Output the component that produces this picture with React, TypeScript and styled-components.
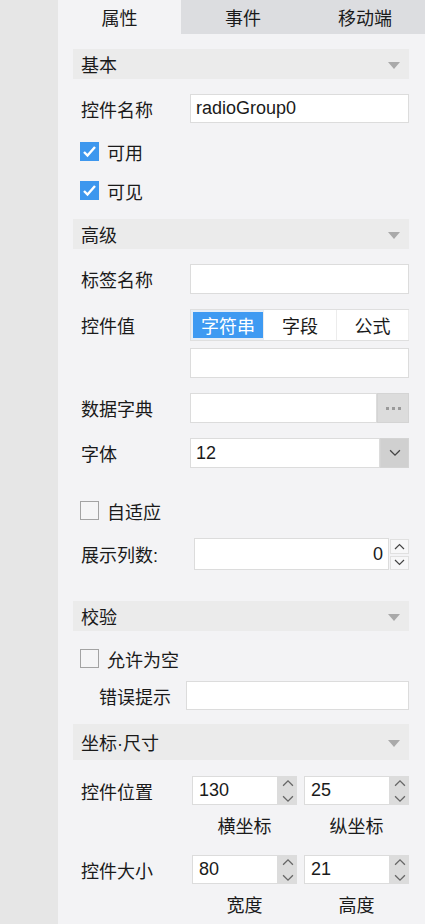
import React from "react";
import styled, { createGlobalStyle } from "styled-components";

const Global = createGlobalStyle`
  html, body { margin: 0; padding: 0; background: #e6e6e6; }
  body {
    font-family: "Liberation Sans", "Noto Sans CJK SC", sans-serif;
    font-size: 18px;
    color: #1a1a1a;
  }
  * { box-sizing: border-box; }
`;

const Page = styled.div`
  display: flex;
  min-height: 924px;
`;

const SideStrip = styled.div`
  width: 58px;
  flex: none;
  background: #e6e6e6;
`;

const Panel = styled.div`
  flex: 1;
  background: #f3f3f5;
  min-height: 924px;
`;

const Tabs = styled.div`
  display: grid;
  grid-template-columns: 123px 124px 1fr;
  height: 34px;
  background: #dcdde0;
`;

const Tab = styled.div<{ $active?: boolean }>`
  display: flex;
  align-items: center;
  justify-content: center;
  font-size: 18px;
  background: ${(p) => (p.$active ? "#f3f3f5" : "transparent")};
`;

const Content = styled.div`
  padding: 0 16px 0 15px;
  display: flex;
  flex-direction: column;
`;

const SectionHeader = styled.div<{ $mt: number; $h?: number }>`
  margin-top: ${(p) => p.$mt}px;
  height: ${(p) => p.$h ?? 30}px;
  background: #ebebeb;
  display: flex;
  align-items: center;
  justify-content: space-between;
  padding: 0 9px 0 8px;
  font-size: 18px;
`;

const Caret = styled.span`
  width: 0;
  height: 0;
  border-left: 6px solid transparent;
  border-right: 6px solid transparent;
  border-top: 7px solid #a9a9a9;
  margin-top: 3px;
`;

const Row = styled.div<{ $mt: number; $h?: number }>`
  margin-top: ${(p) => p.$mt}px;
  height: ${(p) => p.$h ?? 30}px;
  display: flex;
  align-items: center;
`;

const Label = styled.div<{ $w?: number; $pl?: number }>`
  width: ${(p) => p.$w ?? 117}px;
  padding-left: ${(p) => p.$pl ?? 8}px;
  flex: none;
  white-space: nowrap;
`;

const TextBox = styled.div<{ $align?: string }>`
  flex: 1;
  height: 100%;
  background: #fff;
  border: 1px solid #dcdcdc;
  display: flex;
  align-items: center;
  justify-content: ${(p) => p.$align ?? "flex-start"};
  padding: 0 5px;
  font-size: 18px;
`;

const CheckRow = styled.div<{ $mt: number }>`
  margin-top: ${(p) => p.$mt}px;
  height: 19px;
  display: flex;
  align-items: center;
  gap: 8px;
  padding-left: 7px;
`;

const Box = styled.span<{ $checked?: boolean }>`
  width: 19px;
  height: 19px;
  flex: none;
  display: flex;
  align-items: center;
  justify-content: center;
  background: ${(p) => (p.$checked ? "#3d97ee" : "#f5f5f6")};
  border: ${(p) => (p.$checked ? "none" : "1.5px solid #a3a3a3")};
`;

const Segmented = styled.div`
  flex: 1;
  height: 100%;
  display: grid;
  grid-template-columns: 73px 73px 1fr;
  background: #fff;
  border: 1px solid #dfdfdf;
  border-right: none;
`;

const Segment = styled.div<{ $active?: boolean }>`
  display: flex;
  align-items: center;
  justify-content: center;
  background: ${(p) => (p.$active ? "#3e9af2" : "#fff")};
  color: ${(p) => (p.$active ? "#fff" : "#1a1a1a")};
  border: ${(p) => (p.$active ? "2px solid #e6eef7" : "none")};
  border-right: 1px solid #ececec;
`;

const Combo = styled.div`
  flex: 1;
  height: 100%;
  display: flex;
`;

const SideButton = styled.div<{ $w: number; $bg: string }>`
  width: ${(p) => p.$w}px;
  flex: none;
  height: 100%;
  background: ${(p) => p.$bg};
  border: 1px solid #d4d4d4;
  display: flex;
  align-items: center;
  justify-content: center;
  gap: 3px;
`;

const Dot = styled.span`
  width: 3px;
  height: 3px;
  background: #9a9a9a;
`;

const SmallSpin = styled.div`
  width: 20px;
  flex: none;
  height: 100%;
  display: flex;
  flex-direction: column;
  gap: 2px;
  padding: 1px 0 0 1px;
`;

const SmallSpinBtn = styled.div`
  flex: 1;
  background: #f7f7f8;
  border: 1px solid #e0e0e0;
  display: flex;
  align-items: center;
  justify-content: center;
`;

const PairGroup = styled.div`
  flex: 1;
  display: grid;
  grid-template-columns: 105px 105px;
  justify-content: space-between;
  height: 100%;
`;

const NumField = styled.div`
  display: flex;
  height: 100%;
`;

const NumInput = styled.div`
  flex: 1;
  background: #fff;
  border: 1px solid #dcdcdc;
  display: flex;
  align-items: center;
  padding: 0 6px;
  font-size: 18px;
`;

const Spin = styled.div`
  width: 19px;
  flex: none;
  background: #dcdcdc;
  display: flex;
  flex-direction: column;
  justify-content: space-between;
  align-items: center;
  padding: 3px 0 2px;
`;

const SubLabels = styled.div<{ $mt: number }>`
  margin-top: ${(p) => p.$mt}px;
  height: 22px;
  padding-left: 119px;
  display: grid;
  grid-template-columns: 105px 105px;
  justify-content: space-between;
`;

const SubLabel = styled.div`
  text-align: center;
  font-size: 18px;
  line-height: 22px;
`;

const Chevron = ({ up, w = 11, h = 7, color = "#555" }: { up?: boolean; w?: number; h?: number; color?: string }) => (
  <svg width={w} height={h} viewBox="0 0 11 7">
    <path
      d={up ? "M1 6 L5.5 1.5 L10 6" : "M1 1 L5.5 5.5 L10 1"}
      fill="none"
      stroke={color}
      strokeWidth="1.2"
    />
  </svg>
);

const Tick = () => (
  <svg width="15" height="13" viewBox="0 0 15 13">
    <path d="M2 7 L5.5 10.5 L13 2" fill="none" stroke="#fff" strokeWidth="2.4" />
  </svg>
);

const Pair = ({ a, b }: { a: string; b: string }) => (
  <PairGroup>
    {[a, b].map((v) => (
      <NumField key={v}>
        <NumInput>{v}</NumInput>
        <Spin>
          <Chevron up w={12} h={8} color="#666" />
          <Chevron w={12} h={8} color="#666" />
        </Spin>
      </NumField>
    ))}
  </PairGroup>
);

export default function App() {
  return (
    <>
      <Global />
      <Page>
        <SideStrip />
        <Panel>
          <Tabs>
            <Tab $active>属性</Tab>
            <Tab>事件</Tab>
            <Tab>移动端</Tab>
          </Tabs>
          <Content>
            <SectionHeader $mt={15}>
              基本
              <Caret />
            </SectionHeader>
            <Row $mt={15} $h={29}>
              <Label>控件名称</Label>
              <TextBox>radioGroup0</TextBox>
            </Row>
            <CheckRow $mt={19}>
              <Box $checked>
                <Tick />
              </Box>
              可用
            </CheckRow>
            <CheckRow $mt={20}>
              <Box $checked>
                <Tick />
              </Box>
              可见
            </CheckRow>

            <SectionHeader $mt={19}>
              高级
              <Caret />
            </SectionHeader>
            <Row $mt={15}>
              <Label>标签名称</Label>
              <TextBox />
            </Row>
            <Row $mt={15} $h={32}>
              <Label>控件值</Label>
              <Segmented>
                <Segment $active>字符串</Segment>
                <Segment>字段</Segment>
                <Segment>公式</Segment>
              </Segmented>
            </Row>
            <Row $mt={7}>
              <Label />
              <TextBox />
            </Row>
            <Row $mt={15}>
              <Label>数据字典</Label>
              <Combo>
                <TextBox />
                <SideButton $w={32} $bg="#dcdcdc">
                  <Dot />
                  <Dot />
                  <Dot />
                </SideButton>
              </Combo>
            </Row>
            <Row $mt={15}>
              <Label>字体</Label>
              <Combo>
                <TextBox>12</TextBox>
                <SideButton $w={29} $bg="#d0d0d0">
                  <Chevron w={12} h={8} color="#444" />
                </SideButton>
              </Combo>
            </Row>
            <CheckRow $mt={33}>
              <Box />
              自适应
            </CheckRow>
            <Row $mt={18} $h={32}>
              <Label $w={121}>展示列数:</Label>
              <Combo>
                <TextBox $align="flex-end">0</TextBox>
                <SmallSpin>
                  <SmallSpinBtn>
                    <Chevron up w={11} h={7} color="#444" />
                  </SmallSpinBtn>
                  <SmallSpinBtn>
                    <Chevron w={11} h={7} color="#444" />
                  </SmallSpinBtn>
                </SmallSpin>
              </Combo>
            </Row>

            <SectionHeader $mt={31}>
              校验
              <Caret />
            </SectionHeader>
            <CheckRow $mt={18}>
              <Box />
              允许为空
            </CheckRow>
            <Row $mt={13} $h={29}>
              <Label $w={113} $pl={26}>错误提示</Label>
              <TextBox />
            </Row>

            <SectionHeader $mt={14} $h={36}>
              坐标·尺寸
              <Caret />
            </SectionHeader>
            <Row $mt={16} $h={29}>
              <Label $w={119}>控件位置</Label>
              <Pair a="130" b="25" />
            </Row>
            <SubLabels $mt={11}>
              <SubLabel>横坐标</SubLabel>
              <SubLabel>纵坐标</SubLabel>
            </SubLabels>
            <Row $mt={17} $h={29}>
              <Label $w={119}>控件大小</Label>
              <Pair a="80" b="21" />
            </Row>
            <SubLabels $mt={11}>
              <SubLabel>宽度</SubLabel>
              <SubLabel>高度</SubLabel>
            </SubLabels>
          </Content>
        </Panel>
      </Page>
    </>
  );
}
